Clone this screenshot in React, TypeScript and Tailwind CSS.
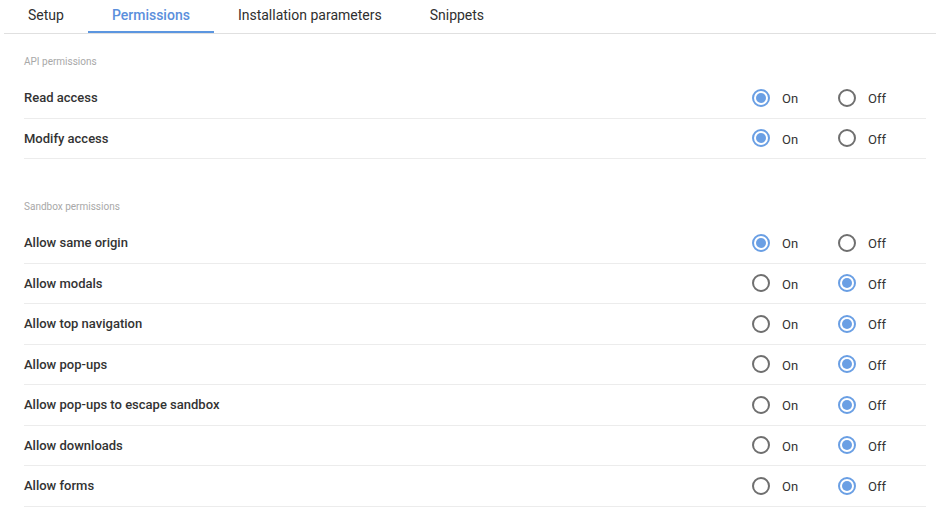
import React, { useState } from 'react';

type Perm = { label: string; on: boolean };

const apiPerms: Perm[] = [
  { label: 'Read access', on: true },
  { label: 'Modify access', on: true },
];

const sandboxPerms: Perm[] = [
  { label: 'Allow same origin', on: true },
  { label: 'Allow modals', on: false },
  { label: 'Allow top navigation', on: false },
  { label: 'Allow pop-ups', on: false },
  { label: 'Allow pop-ups to escape sandbox', on: false },
  { label: 'Allow downloads', on: false },
  { label: 'Allow forms', on: false },
];

const tabs = ['Setup', 'Permissions', 'Installation parameters', 'Snippets'];

function Radio({ checked, label, onClick }: { checked: boolean; label: string; onClick: () => void }) {
  return (
    <button onClick={onClick} className="flex w-[86px] items-center gap-3 text-left">
      <span
        className={
          checked
            ? 'flex h-[18px] w-[18px] items-center justify-center rounded-full border-2 border-[#6a9fe4]'
            : 'flex h-[18px] w-[18px] items-center justify-center rounded-full border-2 border-[#6f6f6f]'
        }
      >
        {checked && <span className="h-[10px] w-[10px] rounded-full bg-[#6a9fe4]" />}
      </span>
      <span className="pt-[2px] text-[13px] text-[#333]">{label}</span>
    </button>
  );
}

function Section({ title, items, className }: { title: string; items: Perm[]; className?: string }) {
  const [values, setValues] = useState(items.map((i) => i.on));

  return (
    <section className={className}>
      <div className="pt-[21px] pb-[9px] text-[10px] leading-[14px] text-[#a8a8a8]">{title}</div>
      {items.map((item, idx) => (
        <div key={item.label} className="flex h-[40.5px] items-center border-b border-[#ececec]">
          <span className="text-[13px] font-medium text-[#333]">{item.label}</span>
          <div className="ml-auto flex pr-[2px]">
            <Radio
              checked={values[idx]}
              label="On"
              onClick={() => setValues(values.map((v, i) => (i === idx ? true : v)))}
            />
            <Radio
              checked={!values[idx]}
              label="Off"
              onClick={() => setValues(values.map((v, i) => (i === idx ? false : v)))}
            />
          </div>
        </div>
      ))}
    </section>
  );
}

export default function App() {
  const [active, setActive] = useState(1);

  return (
    <div className="h-[532px] w-[936px] bg-white font-['Roboto',sans-serif]">
      {/* Tabs */}
      <div className="ml-1 flex h-[34px] border-b border-[#e0e0e0]">
        {tabs.map((t, i) => (
          <button
            key={t}
            onClick={() => setActive(i)}
            className={
              i === active
                ? 'flex items-center border-b-2 border-[#5b96e0] px-6 text-[14px] font-medium text-[#5b8fdc]'
                : 'flex items-center border-b-2 border-transparent px-6 text-[14px] text-[#2f2f2f]'
            }
          >
            {t}
          </button>
        ))}
      </div>

      {/* Content */}
      <div className="pl-6 pr-[10px]">
        <Section title="API permissions" items={apiPerms} />
        <Section title="Sandbox permissions" items={sandboxPerms} className="mt-5" />
      </div>
    </div>
  );
}
